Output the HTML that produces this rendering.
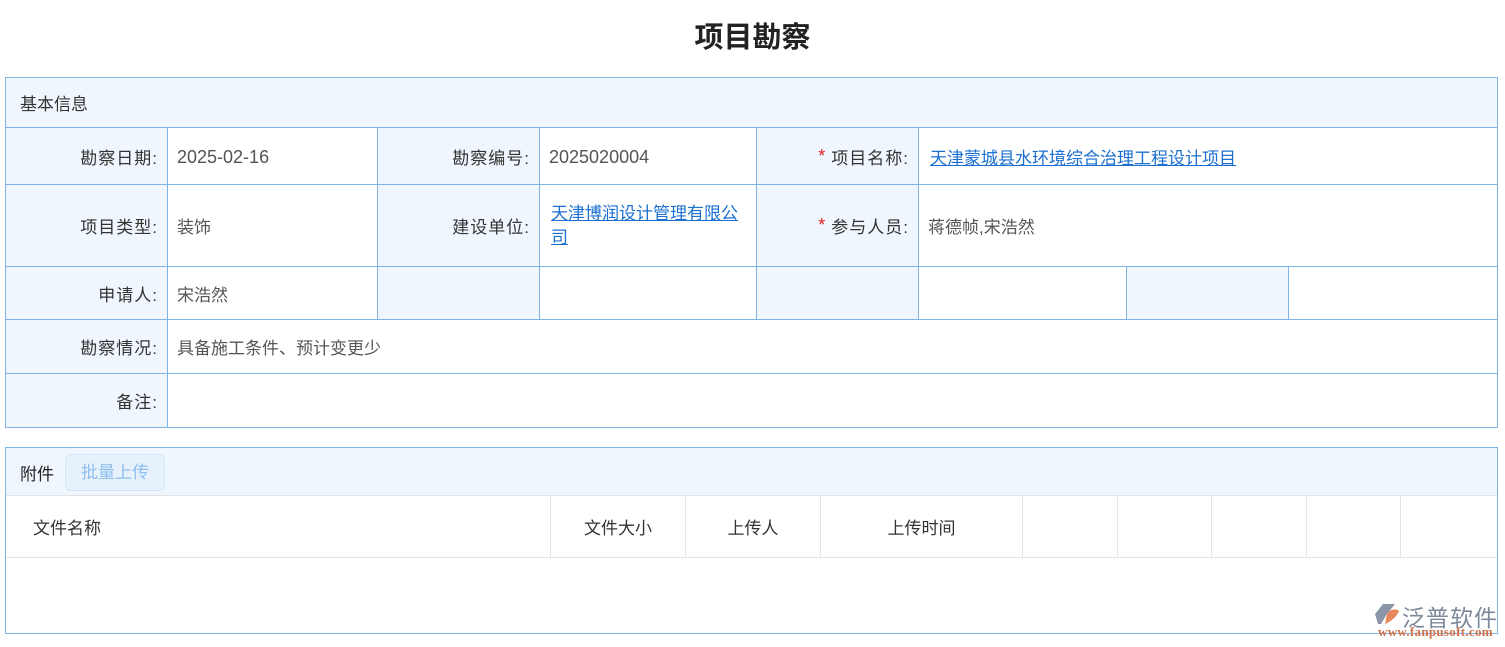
<!DOCTYPE html><html><head><meta charset="utf-8"><style>
body{margin:0;width:1505px;height:647px;background:#fff;font-family:"Liberation Sans","Noto Sans CJK SC",sans-serif;position:relative;overflow:hidden;color:#333}
.a{position:absolute;box-sizing:border-box}
.c{position:absolute;box-sizing:border-box;border-right:1px solid #80b3e6;border-bottom:1px solid #80b3e6;font-size:17px;display:flex;align-items:center;padding:0 9px}
.l{background:#f0f6fe;justify-content:flex-end;color:#333;letter-spacing:1px}
.v{color:#555}
a{color:#1a6fd0;text-decoration:underline}
.s{color:#e02020;margin-right:5px;font-size:18px}
.h{position:absolute;box-sizing:border-box;border-right:1px solid #e4e4e4;font-size:17px;display:flex;align-items:center;justify-content:center;color:#333;height:61px;top:496px}
</style></head><body>
<div class="a" style="top:14px;left:0;width:100%;text-align:center;font-size:29px;font-weight:bold;color:#222">项目勘察</div>
<div class="a" style="left:5px;top:77px;width:1493px;height:351px;border:1px solid #80b3e6;border-right:none;border-bottom:none"></div>
<div class="c" style="left:5px;top:77px;width:1493px;height:51px;background:#f0f6fe;border-left:1px solid #80b3e6;border-top:1px solid #80b3e6;padding-left:14px">基本信息</div>
<div class="c l" style="left:6px;top:128px;width:162px;height:57px">勘察日期:</div>
<div class="c v" style="left:168px;top:128px;width:210px;height:57px;font-size:18px;padding-top:2px">2025-02-16</div>
<div class="c l" style="left:378px;top:128px;width:162px;height:57px">勘察编号:</div>
<div class="c v" style="left:540px;top:128px;width:217px;height:57px;font-size:18px;padding-top:2px">2025020004</div>
<div class="c l" style="left:757px;top:128px;width:162px;height:57px"><span class="s">*</span>项目名称:</div>
<div class="c v" style="left:919px;top:128px;width:579px;height:57px;padding-left:11px"><a>天津蒙城县水环境综合治理工程设计项目</a></div>
<div class="c l" style="left:6px;top:185px;width:162px;height:82px">项目类型:</div>
<div class="c v" style="left:168px;top:185px;width:210px;height:82px">装饰</div>
<div class="c l" style="left:378px;top:185px;width:162px;height:82px">建设单位:</div>
<div class="c v" style="left:540px;top:185px;width:217px;height:82px;padding-left:11px;padding-right:11px;line-height:24px"><a>天津博润设计管理有限公司</a></div>
<div class="c l" style="left:757px;top:185px;width:162px;height:82px"><span class="s">*</span>参与人员:</div>
<div class="c v" style="left:919px;top:185px;width:579px;height:82px">蒋德帧,宋浩然</div>
<div class="c l" style="left:6px;top:267px;width:162px;height:53px">申请人:</div>
<div class="c v" style="left:168px;top:267px;width:210px;height:53px">宋浩然</div>
<div class="c l" style="left:378px;top:267px;width:162px;height:53px"></div>
<div class="c" style="left:540px;top:267px;width:217px;height:53px"></div>
<div class="c l" style="left:757px;top:267px;width:162px;height:53px"></div>
<div class="c" style="left:919px;top:267px;width:208px;height:53px"></div>
<div class="c l" style="left:1127px;top:267px;width:162px;height:53px"></div>
<div class="c" style="left:1289px;top:267px;width:209px;height:53px"></div>
<div class="c l" style="left:6px;top:320px;width:162px;height:54px">勘察情况:</div>
<div class="c v" style="left:168px;top:320px;width:1330px;height:54px">具备施工条件、预计变更少</div>
<div class="c l" style="left:6px;top:374px;width:162px;height:54px">备注:</div>
<div class="c v" style="left:168px;top:374px;width:1330px;height:54px"></div>
<div class="a" style="left:5px;top:447px;width:1493px;height:187px;border:1px solid #80b3e6"></div>
<div class="a" style="left:6px;top:448px;width:1491px;height:48px;background:#f0f6fe;border-bottom:1px solid #e4e4e4"></div>
<div class="a" style="left:20px;top:460px;font-size:17px;color:#222">附件</div>
<div class="a" style="left:65px;top:454px;width:100px;height:37px;border:1px solid #d4e6f7;border-radius:6px;background:#e6f1fc;color:#8fc0ee;font-size:17px;text-align:center;line-height:35px">批量上传</div>
<div class="a" style="left:6px;top:557px;width:1491px;border-top:1px solid #e4e4e4"></div>
<div class="h" style="left:6px;width:545px;justify-content:flex-start;padding-left:27px">文件名称</div>
<div class="h" style="left:551px;width:135px">文件大小</div>
<div class="h" style="left:686px;width:135px">上传人</div>
<div class="h" style="left:821px;width:202px">上传时间</div>
<div class="h" style="left:1023px;width:95px"></div>
<div class="h" style="left:1118px;width:94px"></div>
<div class="h" style="left:1212px;width:95px"></div>
<div class="h" style="left:1307px;width:94px"></div>
<svg class="a" style="left:1375px;top:603px" width="26" height="22" viewBox="0 0 26 22"><path d="M8 1h12L12 11 6 21H3L0 11z" fill="#8a95a8"/><path d="M12 11c3-5 9-6 12-3-2 5-7 10-14 13z" fill="#e8875a"/></svg>
<div class="a" style="left:1402px;top:599px;font-size:23px;color:#7d8898;letter-spacing:1px">泛普软件</div>
<div class="a" style="left:1378px;top:624px;font-size:13px;color:#d0704a;font-family:'Liberation Serif',serif;font-weight:bold;letter-spacing:0.3px">www.fanpusoft.com</div>
</body></html>
